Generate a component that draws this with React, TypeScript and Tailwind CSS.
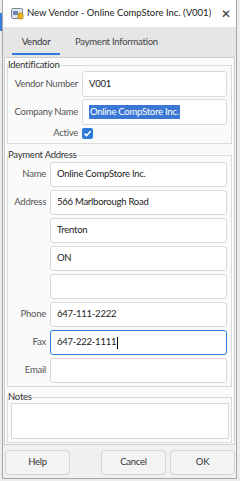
const font = { fontFamily: 'Lato, "Open Sans", sans-serif' };

const txt = "whitespace-nowrap text-[9.5px] tracking-[-0.25px]";

function Field({ label, value, focused }: { label?: string; value?: string; focused?: boolean }) {
  return (
    <div className="flex items-center">
      <div className={`w-[42px] shrink-0 pr-[4px] text-right text-[#555] ${txt}`}>{label}</div>
      <div
        className={`flex h-[25px] w-[177px] items-center rounded-[3px] border bg-white px-[6px] text-[#222] ${txt} ${
          focused ? "border-[#2f7bd9]" : "border-[#d9d9d9]"
        }`}
      >
        {value}
        {focused && <span className="ml-[1px] h-[12px] w-[1px] bg-black" />}
      </div>
    </div>
  );
}

function IdField({ label, value, selected }: { label: string; value: string; selected?: boolean }) {
  return (
    <div className="flex items-center">
      <div className={`w-[74px] shrink-0 pr-[4px] text-right text-[#555] ${txt}`}>{label}</div>
      <div className={`flex h-[26px] w-[145px] items-center rounded-[3px] border border-[#d9d9d9] bg-white px-[6px] text-[#222] ${txt}`}>
        {selected ? <span className="bg-[#3b78d6] px-[1px] text-white">{value}</span> : value}
      </div>
    </div>
  );
}

function Btn({ children, className }: { children: string; className?: string }) {
  return (
    <button className={`h-[25px] w-[65px] rounded-[4px] border border-[#d4d4d4] bg-[#f3f3f3] text-[#333] ${txt} ${className ?? ""}`}>
      {children}
    </button>
  );
}

export default function App() {
  return (
    <div className="relative h-[481px] w-[240px] overflow-hidden bg-[#ececec]" style={font}>
      <div className="absolute left-0 top-[13px] h-[18px] w-[2px] bg-[#3b7ddd]" />
      <div className="ml-[2px] flex h-[479px] w-[235px] flex-col border-x border-b border-[#a6a6a6] bg-[#f3f3f3]">
        {/* Title bar */}
        <div className="flex h-[27px] shrink-0 items-center bg-white pl-[8px] pr-[5px]">
          <svg className="shrink-0" width="13" height="12" viewBox="0 0 13 12">
            <rect x="0.5" y="0.5" width="11" height="10" rx="1" fill="#dfe6ee" stroke="#7b8794" />
            <rect x="2" y="3" width="5" height="4" fill="#6d89b3" />
            <rect x="7" y="5" width="5" height="6" rx="1" fill="#e6b422" stroke="#a77d10" strokeWidth="0.6" />
          </svg>
          <span className="ml-[3px] whitespace-nowrap text-[9.5px] text-[#222]">New Vendor - Online CompStore Inc. (V001)</span>
          <span className="ml-auto text-[12px] leading-none text-[#333]">✕</span>
        </div>
        {/* Tabs */}
        <div className="relative flex h-[30px] shrink-0 items-center bg-[#e6e6e6] pl-[9px]">
          <div className="flex w-[48px] justify-center">
            <span className={`text-[#333] ${txt}`}>Vendor</span>
          </div>
          <span className={`ml-[15px] text-[#444] ${txt}`}>Payment Information</span>
          <div className="absolute bottom-[2px] left-[9px] h-[2px] w-[48px] bg-[#2f7bd9]" />
        </div>
        {/* Content */}
        <div className="mx-[1px] flex shrink-0 flex-col border border-[#cfcfcf] bg-[#fafafa] px-[2px] pb-[1px] pt-[1px]">
          <fieldset className="border border-[#dadada]">
            <legend className={`leading-[12px] text-[#333] ${txt}`}>Identification</legend>
            <div className="flex flex-col gap-[2px]">
              <IdField label="Vendor Number" value="V001" />
              <IdField label="Company Name" value="Online CompStore Inc." selected />
            </div>
            <div className="mb-[4px] mt-[3px] flex h-[11px] items-center">
              <div className={`w-[74px] pr-[4px] text-right text-[#555] ${txt}`}>Active</div>
              <div className="flex h-[11px] w-[11px] items-center justify-center rounded-[2px] bg-[#2f7bd9]">
                <svg width="9" height="9" viewBox="0 0 9 9">
                  <path d="M1.5 4.6 L3.6 6.6 L7.6 2.2" fill="none" stroke="white" strokeWidth="1.5" />
                </svg>
              </div>
            </div>
          </fieldset>
          <fieldset className="mt-[5px] border border-[#dadada] pb-[3px] pt-[1px]">
            <legend className={`leading-[12px] text-[#333] ${txt}`}>Payment Address</legend>
            <div className="flex flex-col gap-[3px]">
              <Field label="Name" value="Online CompStore Inc." />
              <Field label="Address" value="566 Marlborough Road" />
              <Field value="Trenton" />
              <Field value="ON" />
              <Field />
              <Field label="Phone" value="647-111-2222" />
              <Field label="Fax" value="647-222-1111" focused />
              <Field label="Email" />
            </div>
          </fieldset>
          <fieldset className="mt-[4px] border border-[#dadada] pb-[3px] pl-[3px] pr-[2px]">
            <legend className={`-ml-[3px] leading-[12px] text-[#333] ${txt}`}>Notes</legend>
            <div className="h-[36px] border border-[#d9d9d9] bg-white" />
          </fieldset>
        </div>
        {/* Buttons */}
        <div className="flex flex-1 items-start bg-[#f0f0f0] pl-[2px] pr-[1px] pt-[5px]">
          <Btn>Help</Btn>
          <Btn className="ml-auto w-[64px]">Cancel</Btn>
          <Btn className="ml-[4px] w-[64px]">OK</Btn>
        </div>
      </div>
    </div>
  );
}
